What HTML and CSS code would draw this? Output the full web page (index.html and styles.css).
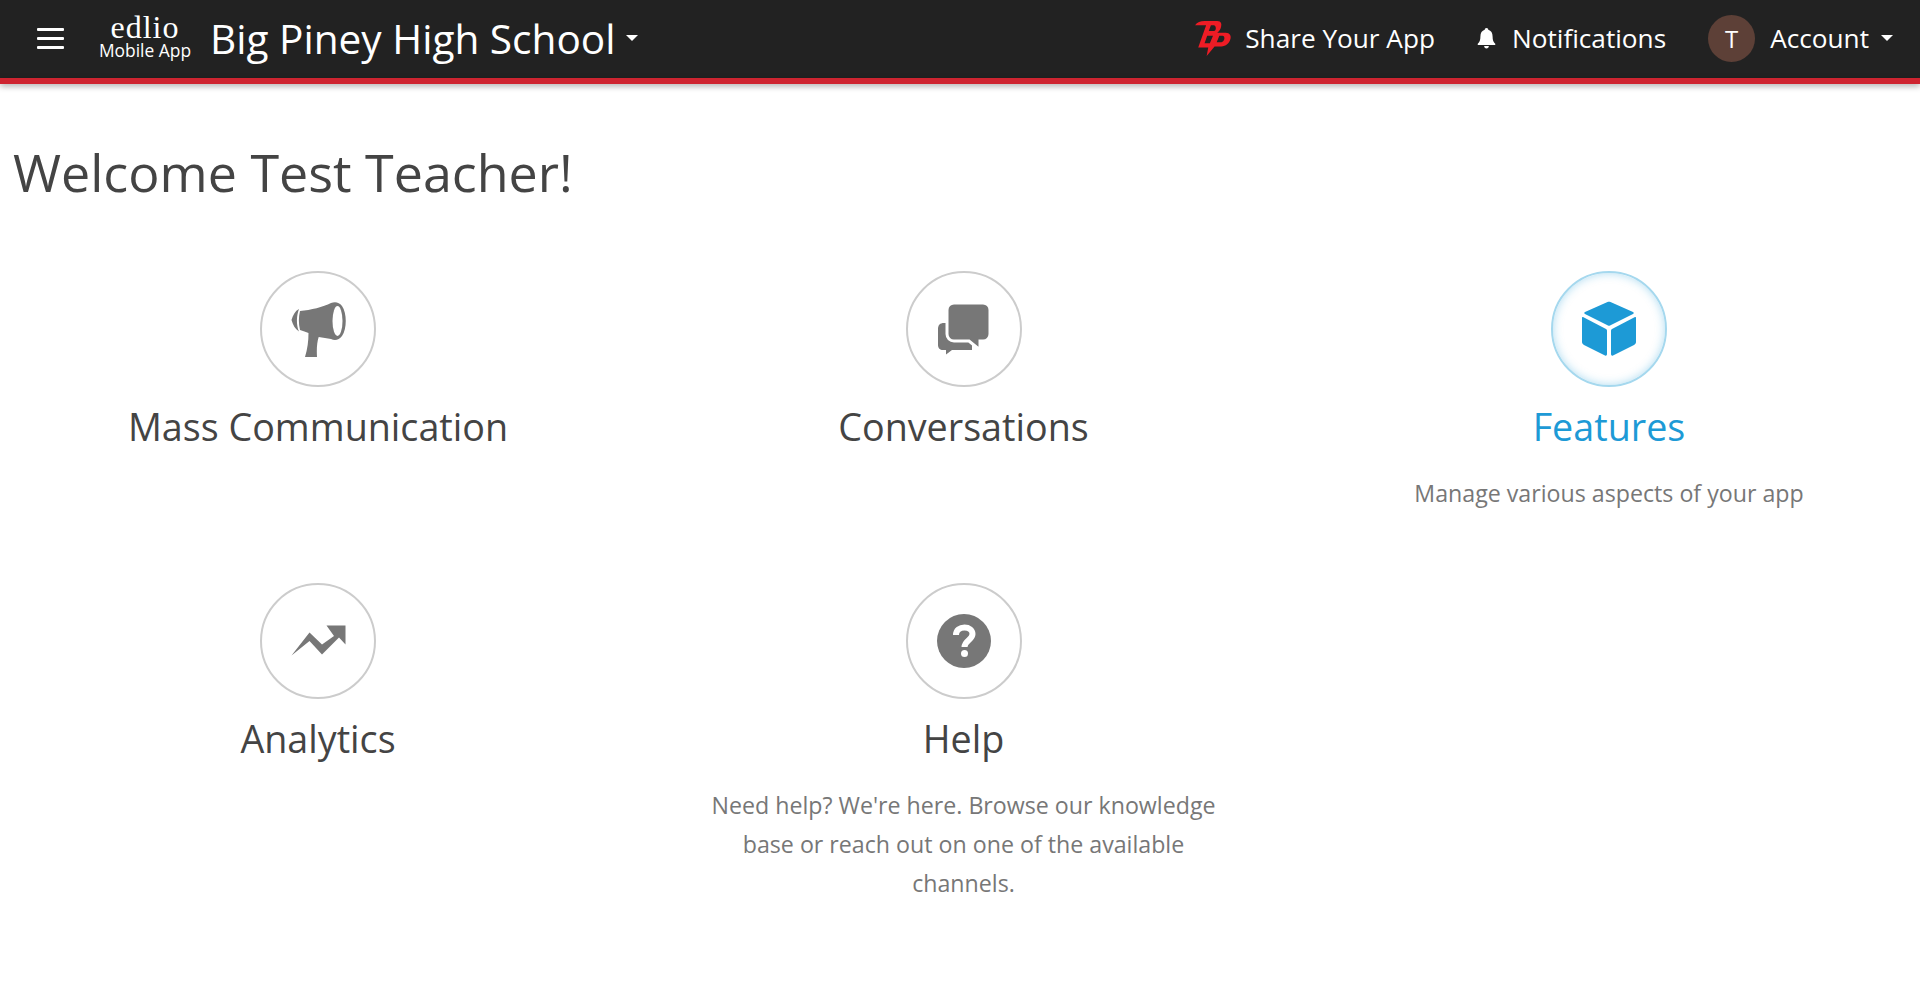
FILE: index.html
```html
<!DOCTYPE html>
<html lang="en">
<head>
    <meta charset="UTF-8">
    <meta name="viewport" content="width=device-width, initial-scale=1.0">
    <title>Edlio Mobile App</title>
    <link rel="stylesheet" href="styles.css">
</head>
<body>
    <header class="navbar">
        <div class="nav-left">
            <button class="menu-button" aria-label="Menu">
                <span></span><span></span><span></span>
            </button>
            <div class="brand">
                <span class="brand-name">edlio</span>
                <span class="brand-sub">Mobile App</span>
            </div>
            <div class="school-name">Big Piney High School</div>
            <span class="caret"></span>
        </div>
        <nav class="nav-right">
            <a class="nav-item share" href="#">
                <svg class="bp-logo" viewBox="0 0 36 35" width="38" height="37">
                    <path fill="#ee1c25" fill-rule="evenodd" d="M1 5 C3 2 6 1 10 1 L22 1 C26 1 26.500 4 25.500 7 C25 9 23.500 11 22 12 L30 12 C34 12 35.500 15 34.500 18 C33.500 22 30 25 26 25 L19.500 25 L12 34 L13.500 26 L4 26 L11.500 5 Z M16 5 L14 10.500 L19 10.500 C21 10.500 21.500 6 19 5 Z M12.500 15 L10 22 L15 22 L18 15 Z M24 15 L21.500 21 L26 21 C29 21 30 15 27 15 Z"/>
                </svg>
                <span>Share Your App</span>
            </a>
            <a class="nav-item notifications" href="#">
                <svg viewBox="0 0 16 18" width="19" height="21">
                    <path fill="#fff" d="M8 0 C9 0 9.500 .7 9.500 1.500 C12 2.200 13.200 4.200 13.200 7 C13.200 10.500 14 12 15.500 13.500 L15.500 14.500 L.5 14.500 L.5 13.500 C2 12 2.800 10.500 2.800 7 C2.800 4.200 4 2.200 6.500 1.500 C6.500 .7 7 0 8 0 Z M6 15.500 L10 15.500 C10 16.700 9.200 17.500 8 17.500 C6.800 17.500 6 16.700 6 15.500 Z"/>
                </svg>
                <span>Notifications</span>
            </a>
            <a class="nav-item account" href="#">
                <span class="avatar">T</span>
                <span>Account</span>
                <span class="caret caret-small"></span>
            </a>
        </nav>
    </header>
    <div class="navbar-line"></div>

    <main class="content">
        <h1>Welcome Test Teacher!</h1>
        <div class="tile-grid">
            <a class="tile" href="#">
                <div class="tile-icon">
                    <svg viewBox="1 0 56 56" width="56" height="56">
                        <path fill="#777" d="M2.500 19 C4 14 6 10 10 8 C7.500 14 7 24 10 30.500 C6 28 4 24 2.500 19 Z"/>
                        <path fill="#777" d="M11 10 C22 9 34 6 42 2 C46 .5 50 1 53 5 C58 12 58 28 53 35 C50 39 46 40 42 38 C38 37.500 34 36.500 29.700 36 C28 41 27.500 48 28 56 L16 56 C18.500 48 19.500 40 19.500 32 C17 31 14 30 11 29 C9.500 23 9.500 16 11 10 Z"/>
                        <ellipse cx="48.500" cy="20" rx="5" ry="15" fill="#fff"/>
                    </svg>
                </div>
                <h2>Mass Communication</h2>
            </a>
            <a class="tile" href="#">
                <div class="tile-icon">
                    <svg viewBox="2 0 56 56" width="56" height="56">
                        <path fill="#777" d="M10 22 L31 22 C35 22 38 25 38 29 L38 49 L18 49 L12 53.500 L12 49 L9 49 C6 49 4 47 4 44 L4 28 C4 24 6 22 10 22 Z"/>
                        <path fill="#777" stroke="#fff" stroke-width="3" d="M20 2 L49 2 C53 2 56 5 56 9 L56 33 C56 37 53 40 49 40 L46 40 L46 49 L35 40 L20 40 C16 40 13 37 13 33 L13 9 C13 5 16 2 20 2 Z"/>
                    </svg>
                </div>
                <h2>Conversations</h2>
            </a>
            <a class="tile tile-active" href="#">
                <div class="tile-icon">
                    <svg viewBox="0 0 56 56" width="56" height="56">
                        <path fill="#1d9ad6" d="M26.500 1 C27.500 .5 28.500 .5 29.500 1 L52 11 C53 11.500 53 12.500 52 13 L29 24.500 C28.500 24.800 27.500 24.800 27 24.500 L4 13 C3 12.500 3 11.500 4 11 Z"/>
                        <path fill="#1d9ad6" d="M2 16 L25 28 C25.500 28.300 26 29 26 30 L26 53 C26 54.500 25 55 24 54.500 L3 44 C1.500 43 1 42 1 41 L1 17 C1 16 1.300 15.700 2 16 Z"/>
                        <path fill="#1d9ad6" d="M54 16 L31 28 C30.500 28.300 30 29 30 30 L30 53 C30 54.500 31 55 32 54.500 L53 44 C54.500 43 55 42 55 41 L55 17 C55 16 54.700 15.700 54 16 Z"/>
                    </svg>
                </div>
                <h2>Features</h2>
                <p>Manage various aspects of your app</p>
            </a>
            <a class="tile" href="#">
                <div class="tile-icon">
                    <svg viewBox="1 0 56 56" width="56" height="56">
                        <path fill="#777" d="M2.500 42.500 L20.500 19.500 L33 31.500 L45 23 L37.500 12.500 L56.500 12.500 L56.500 31.500 L50 24.500 L33 41.500 L20.500 28 Z"/>
                    </svg>
                </div>
                <h2>Analytics</h2>
            </a>
            <a class="tile" href="#">
                <div class="tile-icon">
                    <svg viewBox="0 0 56 56" width="56" height="56">
                        <circle cx="28" cy="28" r="27" fill="#777"/>
                        <path fill="none" stroke="#fff" stroke-width="6" d="M20 22 C20 17 24 14.500 28.500 14.500 C33 14.500 36.500 17 36.500 21 C36.500 27 28.500 27.500 28.500 34"/>
                        <circle cx="28.500" cy="40.500" r="3.500" fill="#fff"/>
                    </svg>
                </div>
                <h2>Help</h2>
                <p>Need help? We're here. Browse our knowledge base or reach out on one of the available channels.</p>
            </a>
        </div>
    </main>
</body>
</html>
```

FILE: styles.css
```css
* {
    box-sizing: border-box;
}
body {
    margin: 0;
    font-family: "Open Sans", Arial, sans-serif;
    background-color: #fff;
    color: #444;
    overflow-x: hidden;
}
a {
    color: inherit;
    text-decoration: none;
}
.navbar {
    display: flex;
    align-items: center;
    justify-content: space-between;
    height: 78px;
    padding: 0 27px 2px 37px;
    background-color: #222;
    color: #fff;
}
.navbar-line {
    height: 6px;
    background-color: #ce2430;
    box-shadow: 0 2px 6px rgba(0, 0, 0, 0.35);
}
.nav-left, .nav-right {
    display: flex;
    align-items: center;
}
.menu-button {
    display: flex;
    flex-direction: column;
    gap: 6px;
    width: 27px;
    padding: 0;
    border: none;
    background: none;
}
.menu-button span {
    height: 3px;
    background-color: #fff;
    border-radius: 1px;
}
.brand {
    display: flex;
    flex-direction: column;
    align-items: center;
    margin-left: 34px;
    width: 94px;
}
.brand-name {
    font-family: "Liberation Serif", serif;
    font-size: 32px;
    line-height: 24px;
    letter-spacing: 1px;
}
.brand-sub {
    font-size: 17.400px;
    line-height: 22px;
}
.school-name {
    margin-left: 18px;
    padding-top: 2px;
    font-size: 40.600px;
    line-height: 54px;
}
.caret {
    width: 0;
    height: 0;
    margin-left: 11px;
    margin-bottom: 1px;
    border-top: 6px solid #fff;
    border-left: 6.500px solid transparent;
    border-right: 6.500px solid transparent;
}
.nav-item {
    display: flex;
    align-items: center;
    font-size: 26.200px;
}
.bp-logo {
    margin-right: 13px;
}
.share {
    margin-right: 42px;
}
.notifications svg {
    margin-right: 16px;
}
.notifications {
    margin-right: 42px;
}
.avatar {
    display: flex;
    align-items: center;
    justify-content: center;
    width: 47px;
    height: 47px;
    margin-right: 15px;
    border-radius: 50%;
    background-color: #5d4037;
    font-size: 24px;
}
.caret-small {
    margin-left: 12px;
}
.content {
    padding: 0 13px;
}
h1 {
    margin: 0;
    padding-top: 58px;
    font-size: 52px;
    font-weight: 400;
    line-height: 60px;
}
.tile-grid {
    display: grid;
    grid-template-columns: repeat(3, 600px);
    column-gap: 45.500px;
    margin-top: 69px;
    margin-left: 5px;
}
.tile {
    display: flex;
    flex-direction: column;
    align-items: center;
    min-height: 312px;
    text-align: center;
}
.tile-icon {
    display: flex;
    align-items: center;
    justify-content: center;
    width: 116px;
    height: 116px;
    border: 2px solid #ccc;
    border-radius: 50%;
}
.tile h2 {
    margin: 16px 0 0;
    font-size: 37.700px;
    font-weight: 400;
    line-height: 48px;
}
.tile p {
    width: 530px;
    margin: 23px 0 0;
    font-size: 23.200px;
    line-height: 39px;
    color: #777;
}
.tile-active .tile-icon {
    border-color: #a5d8ee;
    box-shadow: inset 0 0 10px rgba(29, 154, 214, 0.35);
}
.tile-active h2 {
    color: #1d9ad6;
}
```
